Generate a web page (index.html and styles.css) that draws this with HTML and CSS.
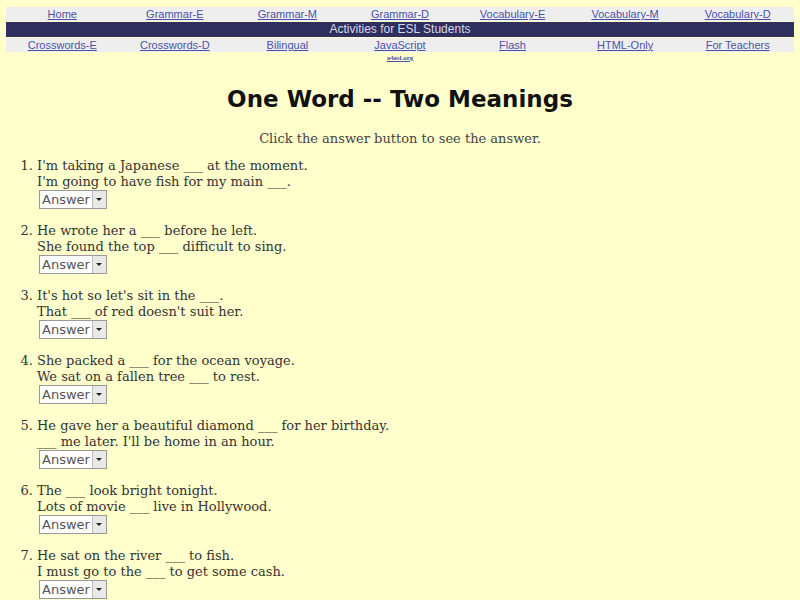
FILE: index.html
```html
<!DOCTYPE html>
<html>
<head>
<meta charset="utf-8">
<title>One Word -- Two Meanings</title>
<link rel="stylesheet" href="styles.css">
</head>
<body>
<div class="page">
  <table class="nav">
    <tr class="nav-row">
      <td><a href="#">Home</a></td>
      <td><a href="#">Grammar-E</a></td>
      <td><a href="#">Grammar-M</a></td>
      <td><a href="#">Grammar-D</a></td>
      <td><a href="#">Vocabulary-E</a></td>
      <td><a href="#">Vocabulary-M</a></td>
      <td><a href="#">Vocabulary-D</a></td>
    </tr>
    <tr class="nav-band">
      <td colspan="7">Activities for ESL Students</td>
    </tr>
    <tr class="nav-row">
      <td><a href="#">Crosswords-E</a></td>
      <td><a href="#">Crosswords-D</a></td>
      <td><a href="#">Bilingual</a></td>
      <td><a href="#">JavaScript</a></td>
      <td><a href="#">Flash</a></td>
      <td><a href="#">HTML-Only</a></td>
      <td><a href="#">For Teachers</a></td>
    </tr>
    <tr class="nav-sub">
      <td></td><td></td><td></td>
      <td><a href="#">a4esl.org</a></td>
      <td></td><td></td><td></td>
    </tr>
  </table>

  <h1 class="title">One Word -- Two Meanings</h1>
  <p class="intro">Click the answer button to see the answer.</p>

  <ol class="quiz">
    <li>
      <div class="line">I'm taking a Japanese ___ at the moment.</div>
      <div class="line">I'm going to have fish for my main ___.</div>
      <span class="ans"><select><option>Answer</option><option>course</option></select></span>
    </li>
    <li>
      <div class="line">He wrote her a ___ before he left.</div>
      <div class="line">She found the top ___ difficult to sing.</div>
      <span class="ans"><select><option>Answer</option><option>note</option></select></span>
    </li>
    <li>
      <div class="line">It's hot so let's sit in the ___.</div>
      <div class="line">That ___ of red doesn't suit her.</div>
      <span class="ans"><select><option>Answer</option><option>shade</option></select></span>
    </li>
    <li>
      <div class="line">She packed a ___ for the ocean voyage.</div>
      <div class="line">We sat on a fallen tree ___ to rest.</div>
      <span class="ans"><select><option>Answer</option><option>trunk</option></select></span>
    </li>
    <li>
      <div class="line">He gave her a beautiful diamond ___ for her birthday.</div>
      <div class="line">___ me later. I'll be home in an hour.</div>
      <span class="ans"><select><option>Answer</option><option>ring</option></select></span>
    </li>
    <li>
      <div class="line">The ___ look bright tonight.</div>
      <div class="line">Lots of movie ___ live in Hollywood.</div>
      <span class="ans"><select><option>Answer</option><option>stars</option></select></span>
    </li>
    <li>
      <div class="line">He sat on the river ___ to fish.</div>
      <div class="line">I must go to the ___ to get some cash.</div>
      <span class="ans"><select><option>Answer</option><option>bank</option></select></span>
    </li>
  </ol>
</div>
</body>
</html>
```

FILE: styles.css
```css
html, body {
  margin: 0;
  padding: 0;
  background: #ffffcc;
}

.page {
  padding: 7px 6px 0 6px;
  font-family: "DejaVu Serif", serif;
  color: #333;
}

.nav {
  width: 100%;
  border-collapse: collapse;
  table-layout: fixed;
  font-family: "Liberation Sans", Arial, sans-serif;
  font-size: 11px;
}

.nav td {
  text-align: center;
  padding: 0;
}

.nav-row td {
  background: #eeeeee;
  height: 14px;
  line-height: 14px;
}

.nav-row a {
  color: #4b52a6;
  text-decoration: underline;
}

.nav-band td {
  background: #2f2f5f;
  color: #d8d8e8;
  font-size: 12px;
  height: 15px;
  line-height: 15px;
  border-top: 1px solid #ffffcc;
  border-bottom: 1px solid #ffffcc;
}

.nav-sub td {
  height: 10px;
  line-height: 9px;
  vertical-align: top;
}

.nav-sub a {
  font-family: "Liberation Serif", serif;
  font-size: 7px;
  font-weight: bold;
  color: #4b52a6;
}

.title {
  margin: 21px 0 0 0;
  text-align: center;
  font-family: "DejaVu Sans", sans-serif;
  font-weight: bold;
  font-size: 23px;
  line-height: 30px;
  color: #111;
}

.intro {
  margin: 17px 0 0 0;
  text-align: center;
  font-size: 13px;
  line-height: 16px;
  color: #444;
}

.quiz {
  margin: 11px 0 0 0;
  padding-left: 31px;
  font-size: 13px;
  line-height: 16px;
}

.quiz li {
  margin-bottom: 14px;
}

.ans {
  position: relative;
  display: inline-block;
  margin-left: 2px;
}

.ans select {
  appearance: none;
  -webkit-appearance: none;
  width: 68px;
  height: 19px;
  padding: 0 0 0 2px;
  border: 1px solid #999;
  border-radius: 0;
  background: #fff;
  font-family: "DejaVu Sans", sans-serif;
  font-size: 13px;
  color: #555;
  display: block;
}

.ans::after {
  content: "";
  position: absolute;
  right: 1px;
  top: 1px;
  width: 13px;
  height: 17px;
  background: #e8e8e8;
  border-left: 1px solid #bbb;
  pointer-events: none;
}

.ans::before {
  content: "";
  position: absolute;
  right: 5px;
  top: 8px;
  width: 0;
  height: 0;
  border-left: 3px solid transparent;
  border-right: 3px solid transparent;
  border-top: 3px solid #222;
  z-index: 1;
  pointer-events: none;
}
```
